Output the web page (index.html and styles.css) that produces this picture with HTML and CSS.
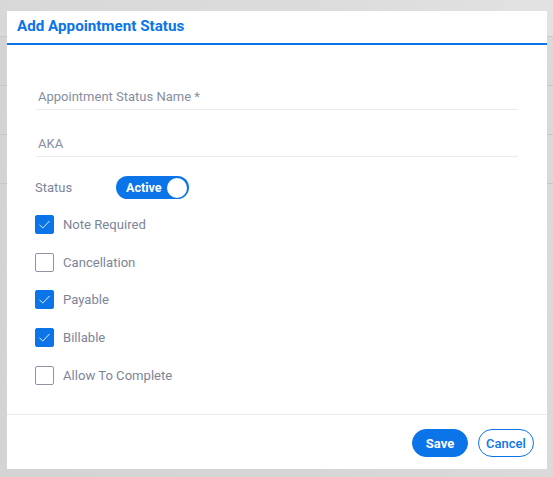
FILE: index.html
```html
<!DOCTYPE html>
<html>
<head>
<meta charset="utf-8">
<link rel="stylesheet" href="styles.css">
</head>
<body>
<div class="backdrop">
  <div class="bd-top"></div>
  <div class="bd-row"></div>
  <div class="bd-row"></div>
  <div class="bd-row"></div>
</div>
<div class="modal">
  <div class="modal-header">Add Appointment Status</div>
  <div class="modal-body">
    <div class="field field-first"><span class="field-label">Appointment Status Name *</span></div>
    <div class="field"><span class="field-label">AKA</span></div>
    <div class="status-row">
      <span class="status-label">Status</span>
      <span class="toggle"><span class="toggle-text">Active</span><span class="knob"></span></span>
    </div>
    <div class="checks">
      <label class="check"><span class="box on"><svg viewBox="0 0 19 19" width="19" height="19"><path d="M4.5 9.8 L7.8 13 L14.5 6" fill="none" stroke="#e8f1fd" stroke-width="1"/></svg></span><span class="check-label">Note Required</span></label>
      <label class="check"><span class="box"></span><span class="check-label">Cancellation</span></label>
      <label class="check"><span class="box on"><svg viewBox="0 0 19 19" width="19" height="19"><path d="M4.5 9.8 L7.8 13 L14.5 6" fill="none" stroke="#e8f1fd" stroke-width="1"/></svg></span><span class="check-label">Payable</span></label>
      <label class="check"><span class="box on"><svg viewBox="0 0 19 19" width="19" height="19"><path d="M4.5 9.8 L7.8 13 L14.5 6" fill="none" stroke="#e8f1fd" stroke-width="1"/></svg></span><span class="check-label">Billable</span></label>
      <label class="check"><span class="box"></span><span class="check-label">Allow To Complete</span></label>
    </div>
  </div>
  <div class="modal-footer">
    <button class="btn btn-save">Save</button>
    <button class="btn btn-cancel">Cancel</button>
  </div>
</div>
</body>
</html>
```
FILE: styles.css
```css
html, body {
  margin: 0;
  padding: 0;
}
body {
  width: 553px;
  height: 477px;
  overflow: hidden;
  background: linear-gradient(100deg, #d3d3d3 0%, #d6d6d6 60%, #dadada 100%);
  font-family: Roboto, "Liberation Sans", sans-serif;
  position: relative;
}
.backdrop {
  display: flex;
  flex-direction: column;
}
.bd-top {
  height: 36px;
  background: linear-gradient(90deg, #d8d8d8 0%, #dcdcdc 60%, #e2e2e2 100%);
  border-bottom: 1px solid #c8c8c8;
}
.bd-row {
  height: 48px;
  border-bottom: 1px solid #c6c6c6;
}
.modal {
  position: absolute;
  left: 7px;
  top: 11px;
  width: 540px;
  height: 458px;
  background: #fff;
  display: flex;
  flex-direction: column;
  box-sizing: border-box;
}
.modal-header {
  height: 32px;
  line-height: 31px;
  padding-left: 10px;
  font-size: 15.2px;
  font-weight: 700;
  color: #0b74e8;
  border-bottom: 2px solid #0b74e8;
  box-sizing: content-box;
}
.modal-body {
  flex: 1;
  padding: 0 29px 0 28px;
  display: flex;
  flex-direction: column;
}
.field {
  margin-left: 1px;
  padding: 8px 0 2px 2px;
  line-height: 20px;
  border-bottom: 1px solid #ebebef;
  font-size: 13px;
  color: #868ea0;
  margin-top: 16px;
}
.field-first {
  margin-top: 34px;
}
.status-row {
  display: flex;
  align-items: center;
  margin-top: 19px;
  height: 23px;
}
.status-label {
  width: 81px;
  font-size: 13px;
  color: #7c8598;
}
.toggle {
  width: 73px;
  height: 23px;
  border-radius: 12px;
  background: #0b74e8;
  display: flex;
  align-items: center;
  justify-content: space-between;
  padding: 0 2px 0 10px;
  box-sizing: border-box;
}
.toggle-text {
  color: #fff;
  font-size: 12.5px;
  font-weight: 700;
}
.knob {
  width: 20px;
  height: 20px;
  border-radius: 50%;
  background: #fff;
}
.checks {
  margin-top: 16px;
  display: flex;
  flex-direction: column;
  gap: 18.7px;
}
.check {
  display: flex;
  align-items: center;
  height: 19px;
}
.box {
  width: 19px;
  height: 19px;
  box-sizing: border-box;
  border: 1px solid #8e95a5;
  border-radius: 2px;
  display: block;
}
.box.on {
  background: #0b74e8;
  border-color: #0b74e8;
}
.box svg {
  display: block;
  margin: -1px;
}
.check-label {
  margin-left: 9px;
  font-size: 13.1px;
  color: #7c8598;
}
.modal-footer {
  height: 55px;
  border-top: 1px solid #e9e9ef;
  display: flex;
  justify-content: flex-end;
  align-items: flex-start;
  gap: 10px;
  padding: 14px 13px 0 0;
  box-sizing: border-box;
}
.btn {
  width: 56px;
  height: 28px;
  border-radius: 14px;
  font-family: Roboto, "Liberation Sans", sans-serif;
  font-size: 13px;
  padding: 0;
  box-sizing: border-box;
  cursor: pointer;
}
.btn-save {
  background: #0b74e8;
  border: 1px solid #0b74e8;
  color: #fff;
  font-weight: 700;
}
.btn-cancel {
  background: #fff;
  border: 1px solid #0b74e8;
  color: #0b74e8;
  font-weight: 500;
}
```
